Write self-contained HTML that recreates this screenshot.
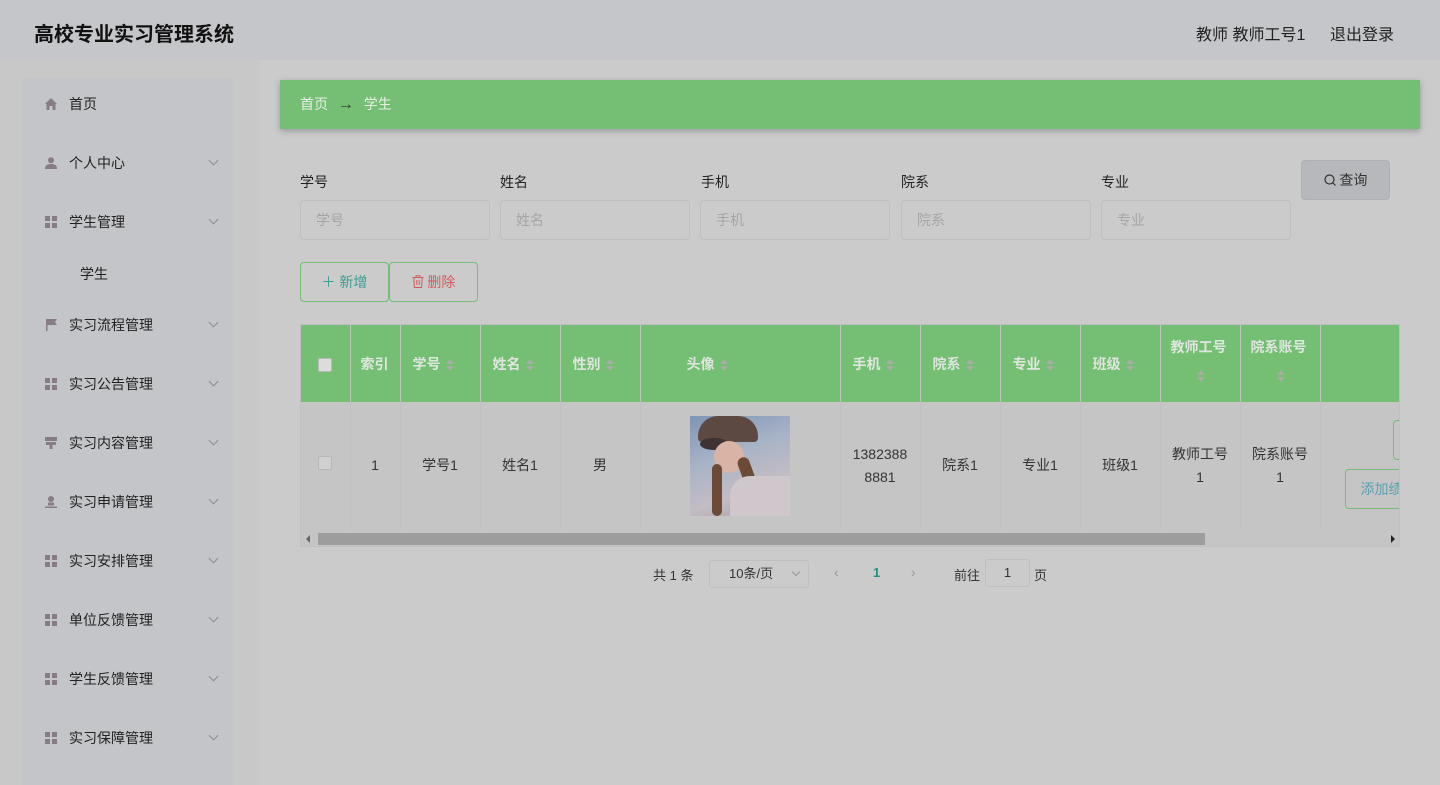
<!DOCTYPE html>
<html><head><meta charset="utf-8"><style>
*{box-sizing:border-box;margin:0;padding:0}
body{width:1440px;height:785px;overflow:hidden;background:#cbcbcb;font-family:"Liberation Sans","Noto Sans CJK SC",sans-serif;font-size:14px;color:#333;position:relative}
.a{position:absolute}
.hdr{left:0;top:0;width:1440px;height:60px;background:#c5c6c9}
.side{left:0;top:60px;width:260px;height:725px;background:#c8c8c8}
.panel{left:22px;top:78px;width:211px;height:707px;background:#c4c5c8}
.mi{left:45px;height:20px;line-height:20px;color:#222;font-size:14px}
.mi .ic{position:absolute;left:0;top:4px;width:12px;height:12px}
.mi span{position:absolute;left:24px;white-space:nowrap}
.chev{position:absolute;left:165px;top:4px;width:7px;height:7px;border-right:1px solid #8a8a99;border-bottom:1px solid #8a8a99;transform:rotate(45deg)}
.grid{background:
linear-gradient(#877c86,#877c86) 0 0/5px 5px no-repeat,
linear-gradient(#877c86,#877c86) 7px 0/5px 5px no-repeat,
linear-gradient(#877c86,#877c86) 0 7px/5px 5px no-repeat,
linear-gradient(#877c86,#877c86) 7px 7px/5px 5px no-repeat}
.bc{left:280px;top:80px;width:1140px;height:49px;background:#74bf73;box-shadow:0 2px 6px rgba(0,0,0,.25);color:#e6efe6;line-height:49px;padding-left:20px}
.lbl{top:172px;color:#222}
.inp{top:200px;width:190px;height:40px;border:1px solid #bdbfc4;border-radius:4px;color:#a5a5a5;line-height:38px;padding-left:15px}
th,td{border-right:1px solid #bfbfc4;text-align:center;font-weight:normal;overflow:hidden;white-space:nowrap}
table{border-collapse:collapse;table-layout:fixed;position:absolute;left:0;top:0;width:1119px}
th{background:#74bf73;color:#dfe6df;font-weight:bold;height:77px;border-right:1px solid #b8c9b8;text-align:left;padding-left:12px;line-height:30px}
td{background:#c5c5c5;height:127px;color:#333;line-height:23px}
.s{display:inline-block;width:8px;height:12px;vertical-align:middle;margin-left:5px;position:relative}
.s:before{content:"";position:absolute;left:0;top:0;border:4px solid transparent;border-bottom:5px solid #a6aea6;border-top:0}
.s:after{content:"";position:absolute;left:0;top:7px;border:4px solid transparent;border-top:5px solid #a6aea6;border-bottom:0}
.cb{display:inline-block;width:14px;height:14px;border:1px solid #b8b8b8;border-radius:2px;background:#d0d0d0}
</style></head><body>
<div class="a hdr"></div>
<div class="a" style="left:34px;top:18px;font-size:20px;font-weight:bold;color:#111">高校专业实习管理系统</div>
<div class="a" style="left:1196px;top:21px;font-size:16px;color:#222">教师 教师工号1</div>
<div class="a" style="left:1330px;top:21px;font-size:16px;color:#222">退出登录</div>
<div class="a side"></div><div class="a panel"></div>

<div class="a mi" style="top:94px"><svg class="ic" viewBox="0 0 12 12"><path d="M6 0L0 6h1.5v6h3V8h3v4h3V6H12z" fill="#877c86"/></svg><span>首页</span></div>
<div class="a mi" style="top:153px"><svg class="ic" viewBox="0 0 12 12"><circle cx="6" cy="3.2" r="3" fill="#877c86"/><path d="M0 12c0-4 2.5-5 6-5s6 1 6 5z" fill="#877c86"/></svg><span>个人中心</span><i class="chev"></i></div>
<div class="a mi" style="top:212px"><i class="ic grid"></i><span>学生管理</span><i class="chev"></i></div>
<div class="a mi" style="top:264px;left:80px">学生</div>
<div class="a mi" style="top:315px"><svg class="ic" viewBox="0 0 12 12"><path d="M1 0h1.5v12H1zM2.5 0H12L10 3l2 3H2.5z" fill="#877c86"/></svg><span>实习流程管理</span><i class="chev"></i></div>
<div class="a mi" style="top:374px"><i class="ic grid"></i><span>实习公告管理</span><i class="chev"></i></div>
<div class="a mi" style="top:433px"><svg class="ic" viewBox="0 0 12 12"><path d="M0 0h12v4H0zM1 5h10v3H1zM4.5 8h3v4h-3z" fill="#877c86"/></svg><span>实习内容管理</span><i class="chev"></i></div>
<div class="a mi" style="top:492px"><svg class="ic" viewBox="0 0 12 12"><circle cx="6" cy="3" r="3" fill="#877c86"/><path d="M3 6.5h6v3H3zM0 10.5h12V12H0z" fill="#877c86"/></svg><span>实习申请管理</span><i class="chev"></i></div>
<div class="a mi" style="top:551px"><i class="ic grid"></i><span>实习安排管理</span><i class="chev"></i></div>
<div class="a mi" style="top:610px"><i class="ic grid"></i><span>单位反馈管理</span><i class="chev"></i></div>
<div class="a mi" style="top:669px"><i class="ic grid"></i><span>学生反馈管理</span><i class="chev"></i></div>
<div class="a mi" style="top:728px"><i class="ic grid"></i><span>实习保障管理</span><i class="chev"></i></div>

<div class="a bc">首页 <span style="color:#333;margin:0 6px;font-size:16px">→</span> 学生</div>

<div class="a lbl" style="left:300px">学号</div><div class="a inp" style="left:300px">学号</div>
<div class="a lbl" style="left:500px">姓名</div><div class="a inp" style="left:500px">姓名</div>
<div class="a lbl" style="left:701px">手机</div><div class="a inp" style="left:700px">手机</div>
<div class="a lbl" style="left:901px">院系</div><div class="a inp" style="left:901px">院系</div>
<div class="a lbl" style="left:1101px">专业</div><div class="a inp" style="left:1101px">专业</div>
<div class="a" style="left:1301px;top:160px;width:89px;height:40px;background:#b6b8bb;border:1px solid #aeb0b4;border-radius:4px;line-height:38px;text-align:center;color:#333">
<svg width="12" height="12" viewBox="0 0 12 12" style="vertical-align:-1px"><circle cx="5.5" cy="5.5" r="4.5" fill="none" stroke="#333" stroke-width="1.2"/><path d="M9 9l2.5 2.5" stroke="#333" stroke-width="1.2"/></svg> 查询</div>

<div class="a" style="left:300px;top:262px;width:89px;height:40px;border:1px solid #74bf73;border-radius:4px;line-height:38px;text-align:center;color:#3a9e92">＋ 新增</div>
<div class="a" style="left:389px;top:262px;width:89px;height:40px;border:1px solid #74bf73;border-radius:4px;line-height:38px;text-align:center;color:#d25a5a">
<svg width="12" height="13" viewBox="0 0 12 13" style="vertical-align:-1px"><path d="M0.5 2.5h11M4 2.5V0.8h4v1.7M1.8 2.5l.6 10h7.2l.6-10M4.8 5v5M7.2 5v5" fill="none" stroke="#d25a5a" stroke-width="1"/></svg> 删除</div>

<div class="a" style="left:300px;top:324px;width:1100px;height:223px;border:1px solid #bfbfc4;overflow:hidden;background:#c5c5c5">
<table>
<colgroup><col width="49"><col width="50"><col width="80"><col width="80"><col width="80"><col width="200"><col width="80"><col width="80"><col width="80"><col width="80"><col width="80"><col width="80"><col width="100"></colgroup>
<tr><th style="text-align:center;padding:0"><span class="cb" style="background:#dcdcdc;vertical-align:middle"></span></th><th style="padding-left:10px">索引</th><th>学号<i class="s"></i></th><th>姓名<i class="s"></i></th><th>性别<i class="s"></i></th><th style="padding-left:46px">头像<i class="s"></i></th><th>手机<i class="s"></i></th><th>院系<i class="s"></i></th><th>专业<i class="s"></i></th><th>班级<i class="s"></i></th><th style="white-space:normal;padding-left:10px;padding-top:0;vertical-align:top;line-height:28px;padding-top:8px">教师工号<br><i class="s" style="margin-left:26px"></i></th><th style="white-space:normal;padding-left:10px;vertical-align:top;line-height:28px;padding-top:8px">院系账号<br><i class="s" style="margin-left:26px"></i></th><th></th></tr>
<tr><td><span class="cb"></span></td><td>1</td><td>学号1</td><td>姓名1</td><td>男</td>
<td><div style="width:100px;height:100px;margin:0 auto;background:linear-gradient(160deg,#7f95b5 0%,#a9b4c7 40%,#c3bcc4 70%,#ad9ba4 100%);position:relative;overflow:hidden">
<div style="position:absolute;left:8px;top:0;width:60px;height:26px;background:#5b4942;border-radius:20px 20px 4px 4px"></div>
<div style="position:absolute;left:10px;top:22px;width:28px;height:12px;background:#3e3332;border-radius:50%"></div>
<div style="position:absolute;left:24px;top:25px;width:30px;height:32px;background:#d9b3a6;border-radius:50%"></div>
<div style="position:absolute;left:55px;top:40px;width:12px;height:55px;background:#6c4a38;border-radius:6px;transform:rotate(-20deg)"></div>
<div style="position:absolute;left:22px;top:48px;width:10px;height:52px;background:#6c4a38;border-radius:6px"></div>
<div style="position:absolute;left:40px;top:60px;width:60px;height:40px;background:#cfc7cc;border-radius:20px 0 0 0"></div></div></td>
<td>1382388<br>8881</td><td>院系1</td><td>专业1</td><td>班级1</td><td>教师工号<br>1</td><td>院系账号<br>1</td>
<td style="position:relative;text-align:left"><div style="position:absolute;left:72px;top:18px;width:40px;height:40px;border:1px solid #74bf73;border-radius:4px"></div><div style="position:absolute;left:24px;top:67px;width:90px;height:40px;border:1px solid #74bf73;border-radius:4px;color:#5aa0b0;line-height:38px;padding-left:15px">添加绩效</div></td></tr>
</table>
<div class="a" style="left:0;top:205px;width:1098px;height:17px;background:#c5c5c5"></div>
<div class="a" style="left:17px;top:208px;width:887px;height:12px;background:#9d9d9d"></div>
<div class="a" style="left:5px;top:210px;border:4px solid transparent;border-right:4px solid #666;border-left:0"></div>
<div class="a" style="left:1090px;top:210px;border:4px solid transparent;border-left:4px solid #222;border-right:0"></div>
</div>

<div class="a" style="left:653px;top:565px;color:#333;font-size:13px">共 1 条</div>
<div class="a" style="left:709px;top:560px;width:100px;height:28px;border:1px solid #bdbfc4;border-radius:3px;line-height:26px;padding-left:19px;font-size:13px">10条/页<i style="position:absolute;left:83px;top:8px;width:6px;height:6px;border-right:1px solid #999;border-bottom:1px solid #999;transform:rotate(45deg)"></i></div>
<div class="a" style="left:834px;top:564px;color:#999">‹</div>
<div class="a" style="left:873px;top:565px;color:#1f8f80;font-weight:bold;font-size:13px">1</div>
<div class="a" style="left:911px;top:564px;color:#999">›</div>
<div class="a" style="left:954px;top:565px;font-size:13px">前往</div>
<div class="a" style="left:985px;top:559px;width:45px;height:28px;border:1px solid #bdbfc4;border-radius:3px;line-height:26px;text-align:center;font-size:13px">1</div>
<div class="a" style="left:1034px;top:565px;font-size:13px">页</div>
</body></html>
